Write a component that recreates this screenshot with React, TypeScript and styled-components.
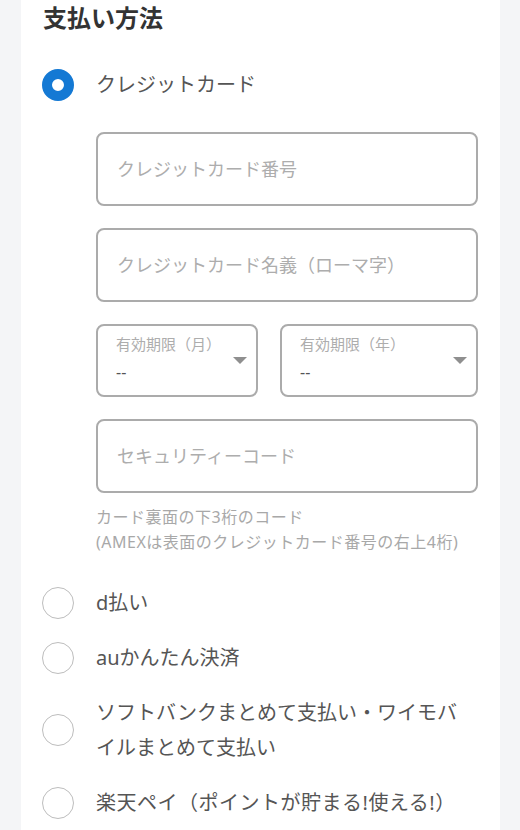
import React from "react";
import styled, { createGlobalStyle } from "styled-components";

const GlobalStyle = createGlobalStyle`
  html, body { margin: 0; padding: 0; background: #f4f5f7; }
  body { font-family: "Noto Sans", "Noto Sans CJK JP", sans-serif; }
  * { box-sizing: border-box; }
`;

const Card = styled.section`
  margin: 0 20px 0 21px;
  background: #ffffff;
  padding: 0 22px 40px 21px;
  min-height: 830px;
`;

const Heading = styled.h2`
  margin: 0;
  font-size: 24px;
  line-height: 36px;
  font-weight: 700;
  color: #333333;
  padding-left: 1px;
`;

const OptionList = styled.div`
  margin-top: 31px;
  display: flex;
  flex-direction: column;
`;

const OptionRow = styled.label<{ $gapBefore?: number }>`
  display: flex;
  align-items: center;
  gap: 22px;
  margin-top: ${(p) => p.$gapBefore ?? 0}px;
  cursor: pointer;
`;

const RadioMark = styled.span<{ $checked?: boolean }>`
  flex: 0 0 32px;
  width: 32px;
  height: 32px;
  border-radius: 50%;
  background: #ffffff;
  border: ${(p) => (p.$checked ? "10px solid #1479d4" : "1.5px solid #bdbdbd")};
`;

const OptionLabel = styled.span<{ $spaced?: boolean }>`
  font-size: 20px;
  line-height: 35px;
  color: #555555;
  max-width: 372px;
  letter-spacing: ${(p) => (p.$spaced ? "0.5px" : "normal")};
`;

const Fields = styled.div`
  margin: 30px 0 0 54px;
  display: flex;
  flex-direction: column;
  gap: 22px;
`;

const TextField = styled.input`
  display: block;
  width: 100%;
  height: 74px;
  border: 2px solid #ababab;
  border-radius: 8px;
  padding: 0 19px;
  font-family: inherit;
  font-size: 18px;
  color: #555555;
  background: #ffffff;
  outline: none;
  &::placeholder { color: #adadad; }
`;

const SelectRow = styled.div`
  display: grid;
  grid-template-columns: 162px 1fr;
  gap: 22px;
`;

const SelectBox = styled.div`
  height: 73px;
  border: 2px solid #ababab;
  border-radius: 8px;
  display: flex;
  align-items: center;
  padding: 0 9px 0 18px;
`;

const SelectText = styled.div`
  flex: 1;
  display: flex;
  flex-direction: column;
  align-self: stretch;
  padding-top: 7px;
`;

const SelectLabel = styled.span`
  font-size: 15px;
  line-height: 22px;
  color: #adadad;
`;

const SelectValue = styled.span`
  font-size: 16px;
  line-height: 22px;
  margin-top: 6px;
  color: #555555;
`;

const Caret = styled.svg`
  flex: 0 0 14px;
  width: 14px;
  height: 8px;
`;

const Help = styled.p`
  margin: -10px 0 0;
  font-size: 16px;
  line-height: 25px;
  letter-spacing: 0.5px;
  color: #a8a8a8;
`;

const Arrow = () => (
  <Caret viewBox="0 0 14 8">
    <path d="M0 0 L14 0 L7 7 Z" fill="#8f8f8f" />
  </Caret>
);

export default function App() {
  return (
    <>
      <GlobalStyle />
      <Card>
        <Heading>支払い方法</Heading>
        <OptionList>
          <OptionRow>
            <RadioMark $checked />
            <OptionLabel>クレジットカード</OptionLabel>
          </OptionRow>
          <Fields>
            <TextField placeholder="クレジットカード番号" />
            <TextField placeholder="クレジットカード名義（ローマ字）" />
            <SelectRow>
              <SelectBox>
                <SelectText>
                  <SelectLabel>有効期限（月）</SelectLabel>
                  <SelectValue>--</SelectValue>
                </SelectText>
                <Arrow />
              </SelectBox>
              <SelectBox>
                <SelectText>
                  <SelectLabel>有効期限（年）</SelectLabel>
                  <SelectValue>--</SelectValue>
                </SelectText>
                <Arrow />
              </SelectBox>
            </SelectRow>
            <TextField placeholder="セキュリティーコード" />
            <Help>
              カード裏面の下3桁のコード
              <br />
              (AMEXは表面のクレジットカード番号の右上4桁)
            </Help>
          </Fields>
          <OptionRow $gapBefore={30}>
            <RadioMark />
            <OptionLabel>d払い</OptionLabel>
          </OptionRow>
          <OptionRow $gapBefore={20}>
            <RadioMark />
            <OptionLabel>auかんたん決済</OptionLabel>
          </OptionRow>
          <OptionRow $gapBefore={20}>
            <RadioMark />
            <OptionLabel>ソフトバンクまとめて支払い・ワイモバイルまとめて支払い</OptionLabel>
          </OptionRow>
          <OptionRow $gapBefore={20}>
            <RadioMark />
            <OptionLabel $spaced>楽天ペイ（ポイントが貯まる!使える!）</OptionLabel>
          </OptionRow>
        </OptionList>
      </Card>
    </>
  );
}
